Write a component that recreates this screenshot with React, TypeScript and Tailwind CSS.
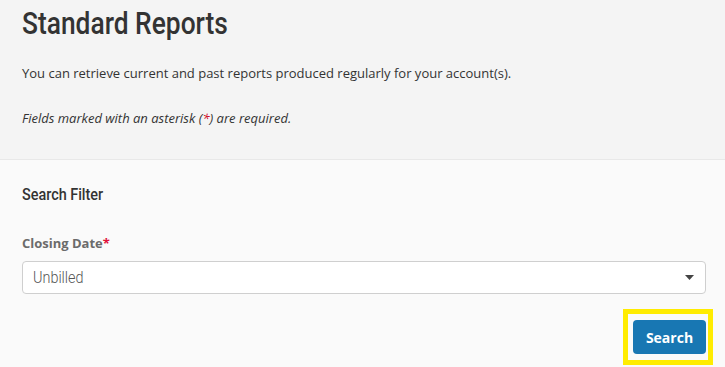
const heading = { fontFamily: 'Roboto, "Liberation Sans", sans-serif' }
const body = { fontFamily: '"Open Sans", "Liberation Sans", sans-serif' }

export default function App() {
  return (
    <div className="w-[725px] h-[367px] overflow-hidden bg-[#fafafa] text-[#333]" style={body}>
      {/* intro */}
      <div className="bg-[#f4f4f4] border-b border-[#e8e8e8] px-[22px] pt-[3px] h-[160px]">
        <h1 className="text-[31px] leading-[42px] font-medium text-[#333] [transform:scaleX(0.85)] origin-left" style={heading}>
          Standard Reports
        </h1>
        <p className="mt-[18px] text-[13px] leading-[20px] text-[#333]">
          You can retrieve current and past reports produced regularly for your account(s).
        </p>
        <p className="mt-[25px] text-[13px] leading-[20px] italic text-[#333]">
          Fields marked with an asterisk (<span className="text-[#d0021b]">*</span>) are required.
        </p>
      </div>

      {/* filter */}
      <div className="px-[22px] pt-[24px]">
        <h2 className="text-[16px] leading-[22px] font-medium text-[#333] [transform:scaleX(0.9)] origin-left" style={heading}>
          Search Filter
        </h2>
        <label className="block mt-[28px] text-[13px] leading-[18px] font-bold text-[#6b6b6b]">
          Closing Date<span className="text-[#e0113a]">*</span>
        </label>
        <div className="mt-[9px] h-[33px] w-[684px] bg-white border border-[#cfcfcf] rounded-[4px] flex items-center justify-between pl-[10px] pr-[10px]">
          <span className="text-[16px] font-light text-[#555] [transform:scaleX(0.9)] origin-left" style={heading}>Unbilled</span>
          <svg width="9" height="5" viewBox="0 0 9 5" className="mr-[1px]">
            <path d="M0 0h9L4.5 5z" fill="#444" />
          </svg>
        </div>
        <div className="flex justify-end mt-[15px] mr-[-10px]">
          <div className="border-[5px] border-[#ffec00] pl-[5px] pr-[2px] pt-[6px] pb-[6px]">
            <button className="h-[34px] w-[73px] rounded-[4px] bg-[#1877b3] text-white text-[14px] font-bold" style={body}>
              Search
            </button>
          </div>
        </div>
      </div>
    </div>
  )
}
